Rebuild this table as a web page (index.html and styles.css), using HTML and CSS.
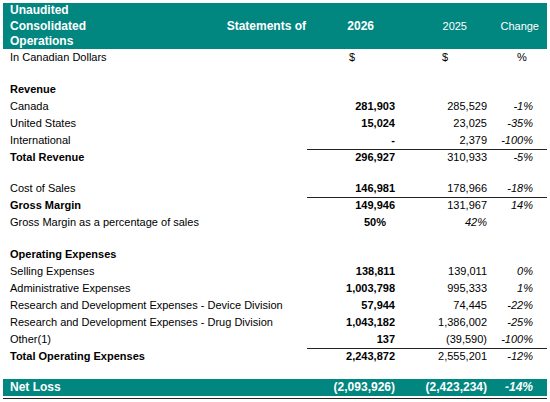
FILE: index.html
```html
<!DOCTYPE html>
<html lang="en">

<head>
    <meta charset="UTF-8">
    <meta name="viewport" content="width=device-width, initial-scale=1.0">
    <title>Statements of Operations</title>
    <link rel="stylesheet" href="styles.css">
</head>

<body>

<div class="statement">
    <!-- Title band -->
    <div class="head">
        <div class="head-title">
            <div class="title-main">Unaudited<br>Consolidated<br>Operations</div>
            <div class="title-side">Statements of</div>
        </div>
        <div class="hcur">2026</div>
        <div class="hprev">2025</div>
        <div class="hchg">Change</div>
    </div>

    <div class="row units">
        <div class="label">In Canadian Dollars</div>
        <div class="ucur">$</div>
        <div class="uprev">$</div>
        <div class="uchg">%</div>
    </div>

    <div class="gap"></div>

    <!-- Revenue -->
    <div class="row heading">
        <div class="label">Revenue</div>
    </div>
    <div class="row">
        <div class="label">Canada</div>
        <div class="cur">281,903</div>
        <div class="prev">285,529</div>
        <div class="chg">-1%</div>
    </div>
    <div class="row">
        <div class="label">United States</div>
        <div class="cur">15,024</div>
        <div class="prev">23,025</div>
        <div class="chg">-35%</div>
    </div>
    <div class="row">
        <div class="label">International</div>
        <div class="cur">-</div>
        <div class="prev">2,379</div>
        <div class="chg">-100%</div>
    </div>
    <div class="row total">
        <div class="label">Total Revenue</div>
        <div class="cur">296,927</div>
        <div class="prev">310,933</div>
        <div class="chg">-5%</div>
    </div>

    <div class="gap"></div>

    <div class="row">
        <div class="label">Cost of Sales</div>
        <div class="cur">146,981</div>
        <div class="prev">178,966</div>
        <div class="chg">-18%</div>
    </div>
    <div class="row total">
        <div class="label">Gross Margin</div>
        <div class="cur">149,946</div>
        <div class="prev">131,967</div>
        <div class="chg">14%</div>
    </div>
    <div class="row">
        <div class="label">Gross Margin as a percentage of sales</div>
        <div class="cur ratio">50%</div>
        <div class="prev ratio">42%</div>
        <div class="chg"></div>
    </div>

    <div class="gap"></div>

    <!-- Operating expenses -->
    <div class="row heading">
        <div class="label">Operating Expenses</div>
    </div>
    <div class="row">
        <div class="label">Selling Expenses</div>
        <div class="cur">138,811</div>
        <div class="prev">139,011</div>
        <div class="chg">0%</div>
    </div>
    <div class="row">
        <div class="label">Administrative Expenses</div>
        <div class="cur">1,003,798</div>
        <div class="prev">995,333</div>
        <div class="chg">1%</div>
    </div>
    <div class="row">
        <div class="label">Research and Development Expenses - Device Division</div>
        <div class="cur">57,944</div>
        <div class="prev">74,445</div>
        <div class="chg">-22%</div>
    </div>
    <div class="row">
        <div class="label">Research and Development Expenses - Drug Division</div>
        <div class="cur">1,043,182</div>
        <div class="prev">1,386,002</div>
        <div class="chg">-25%</div>
    </div>
    <div class="row">
        <div class="label">Other(1)</div>
        <div class="cur">137</div>
        <div class="prev">(39,590)</div>
        <div class="chg">-100%</div>
    </div>
    <div class="row total">
        <div class="label">Total Operating Expenses</div>
        <div class="cur">2,243,872</div>
        <div class="prev">2,555,201</div>
        <div class="chg">-12%</div>
    </div>

    <div class="gap"></div>

    <!-- Bottom line -->
    <div class="net-wrap">
        <div class="row net">
            <div class="label">Net Loss</div>
            <div class="cur">(2,093,926)</div>
            <div class="prev">(2,423,234)</div>
            <div class="chg">-14%</div>
        </div>
    </div>
</div>

</body>

</html>
```

FILE: styles.css
```css
/* Page */
body {
    margin: 0;
    padding: 0;
    font-family: "Liberation Sans", Arial, sans-serif;
    color: #000;
    background-color: #fff;
}

.statement {
    width: 544px;
    margin: 3px 0 0 3px;
    font-size: 11px;
}

/* Title band */
.head {
    display: grid;
    grid-template-columns: 304px 91px 92px 57px;
    align-items: center;
    height: 46px;
    background-color: #018680;
    color: #fff;
}

.head-title {
    display: flex;
    align-items: center;
    justify-content: space-between;
    font-size: 12px;
    font-weight: bold;
}

.title-main {
    padding-left: 7px;
    line-height: 15.5px;
}

.title-side {
    padding-right: 1px;
}

.hcur,
.hprev,
.hchg {
    text-align: right;
}

.hcur {
    font-size: 12px;
    font-weight: bold;
    padding-right: 24px;
}

.hprev {
    padding-right: 23px;
}

.hchg {
    padding-right: 8px;
}

/* Rows */
.row {
    display: grid;
    grid-template-columns: 304px 91px 92px 57px;
    height: 17px;
    line-height: 17px;
}

.gap {
    height: 14.5px;
}

.label {
    padding-left: 7px;
    white-space: nowrap;
}

.heading .label,
.total .label {
    font-weight: bold;
}

.cur,
.prev {
    text-align: right;
    padding-right: 3px;
    white-space: nowrap;
}

.cur {
    font-weight: bold;
}

.chg {
    text-align: right;
    padding-right: 14px;
    font-style: italic;
}

.cur.ratio {
    padding-right: 12px;
}

.prev.ratio {
    font-style: italic;
}

/* Units row */
.ucur {
    padding-left: 42px;
}

.uprev {
    padding-left: 44px;
}

.uchg {
    padding-left: 27px;
}

/* Subtotal rules */
.total .cur,
.total .prev,
.total .chg {
    border-top: 1px solid #222;
    line-height: 15px;
}

/* Net loss band */
.net-wrap {
    padding-bottom: 2px;
    border-bottom: 1px solid #222;
}

.net {
    background-color: #018680;
    color: #fff;
    font-size: 12px;
    font-weight: bold;
}
```
